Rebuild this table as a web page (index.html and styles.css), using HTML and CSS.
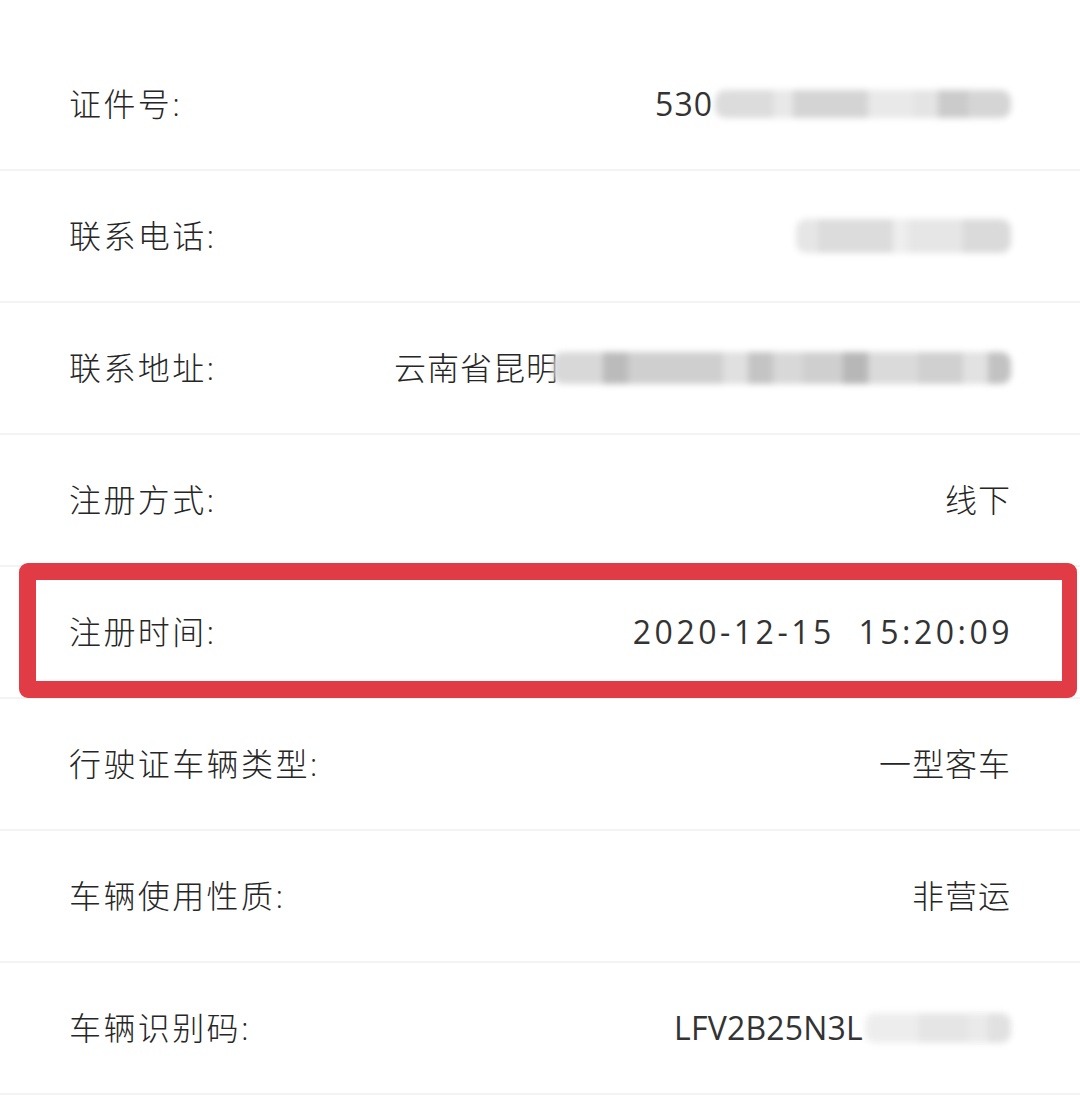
FILE: index.html
```html
<!DOCTYPE html>
<html lang="zh-CN">
<head>
<meta charset="utf-8">
<title>车辆信息</title>
<link rel="stylesheet" href="styles.css">
</head>
<body>
<div class="list">
  <div class="row">
    <span class="label">证件号:</span>
    <span class="val num">530<span class="mosaic m1"><i class="c" style="width:58px;background:#dcdcdc"></i><i class="c" style="width:20px;background:#e8e8e8"></i><i class="c" style="width:75px;background:#d4d4d4"></i><i class="c" style="width:45px;background:#e9e9e9"></i><i class="c" style="width:25px;background:#e4e4e4"></i><i class="c" style="width:30px;background:#cbcbcb"></i><i class="c" style="width:43px;background:#d5d5d5"></i></span></span>
  </div>
  <div class="row">
    <span class="label">联系电话:</span>
    <span class="val"><span class="mosaic m2"><i class="c" style="width:22px;background:#e6e6e6"></i><i class="c" style="width:75px;background:#dcdcdc"></i><i class="c" style="width:15px;background:#eeeeee"></i><i class="c" style="width:55px;background:#e6e6e6"></i><i class="c" style="width:48px;background:#dadada"></i></span></span>
  </div>
  <div class="row">
    <span class="label">联系地址:</span>
    <span class="val">云南省昆明<span class="mosaic m3"><i class="c" style="width:50px;background:#d8d8d8"></i><i class="c" style="width:25px;background:#bbbbbb"></i><i class="c" style="width:95px;background:#cfcfcf"></i><i class="c" style="width:25px;background:#e0e0e0"></i><i class="c" style="width:25px;background:#c4c4c4"></i><i class="c" style="width:30px;background:#d8d8d8"></i><i class="c" style="width:40px;background:#cfcfcf"></i><i class="c" style="width:25px;background:#b7b7b7"></i><i class="c" style="width:50px;background:#dadada"></i><i class="c" style="width:45px;background:#d0d0d0"></i><i class="c" style="width:25px;background:#e2e2e2"></i><i class="c" style="width:23px;background:#c2c2c2"></i></span></span>
  </div>
  <div class="row">
    <span class="label">注册方式:</span>
    <span class="val">线下</span>
  </div>
  <div class="row highlight">
    <span class="label">注册时间:</span>
    <span class="val num date">2020-12-15&nbsp; 15:20:09</span>
  </div>
  <div class="row">
    <span class="label">行驶证车辆类型:</span>
    <span class="val">一型客车</span>
  </div>
  <div class="row">
    <span class="label">车辆使用性质:</span>
    <span class="val">非营运</span>
  </div>
  <div class="row">
    <span class="label">车辆识别码:</span>
    <span class="val num vin">LFV2B25N3L<span class="mosaic m4"><i class="c" style="width:53px;background:#ececec"></i><i class="c" style="width:50px;background:#e3e3e3"></i><i class="c" style="width:20px;background:#e8e8e8"></i><i class="c" style="width:23px;background:#dedede"></i></span></span>
  </div>
</div>
</body>
</html>
```

FILE: styles.css
```css
html, body {
  margin: 0;
  padding: 0;
  background: #ffffff;
}

body {
  font-family: "Open Sans", "Noto Sans CJK SC", sans-serif;
  color: #262626;
  width: 1080px;
  height: 1113px;
  overflow: hidden;
}

.list {
  padding-top: 39px;
}

.row {
  position: relative;
  height: 130px;
  border-bottom: 2px solid #f3f3f3;
  display: flex;
  align-items: center;
  justify-content: space-between;
  padding: 0 70px 0 69px;
  font-size: 32px;
  line-height: 1;
  font-weight: 300;
}

.label {
  white-space: nowrap;
  letter-spacing: 2.4px;
}

.val {
  white-space: nowrap;
  display: flex;
  align-items: center;
  letter-spacing: 1px;
  margin-right: -1px;
}

.num {
  font-weight: 400;
  color: #333333;
  letter-spacing: 1px;
}

.date {
  letter-spacing: 3.5px;
  margin-right: -3px;
}

.vin {
  letter-spacing: 0.2px;
}

.mosaic {
  display: inline-flex;
  height: 28px;
  filter: blur(3px);
  border-radius: 10px;
  overflow: hidden;
}

.mosaic .c {
  display: block;
  height: 100%;
}

.m1 { margin-left: 2px; }
.m2 { height: 34px; }
.m3 { margin-left: -6px; height: 32px; }
.m4 { margin-left: 2px; height: 30px; opacity: 0.9; }

.highlight::after {
  content: "";
  position: absolute;
  left: 19px;
  top: -4px;
  width: 1058px;
  height: 135px;
  box-sizing: border-box;
  border: 17px solid #e13b46;
  border-right-width: 15px;
  border-radius: 9px;
  pointer-events: none;
}
```
